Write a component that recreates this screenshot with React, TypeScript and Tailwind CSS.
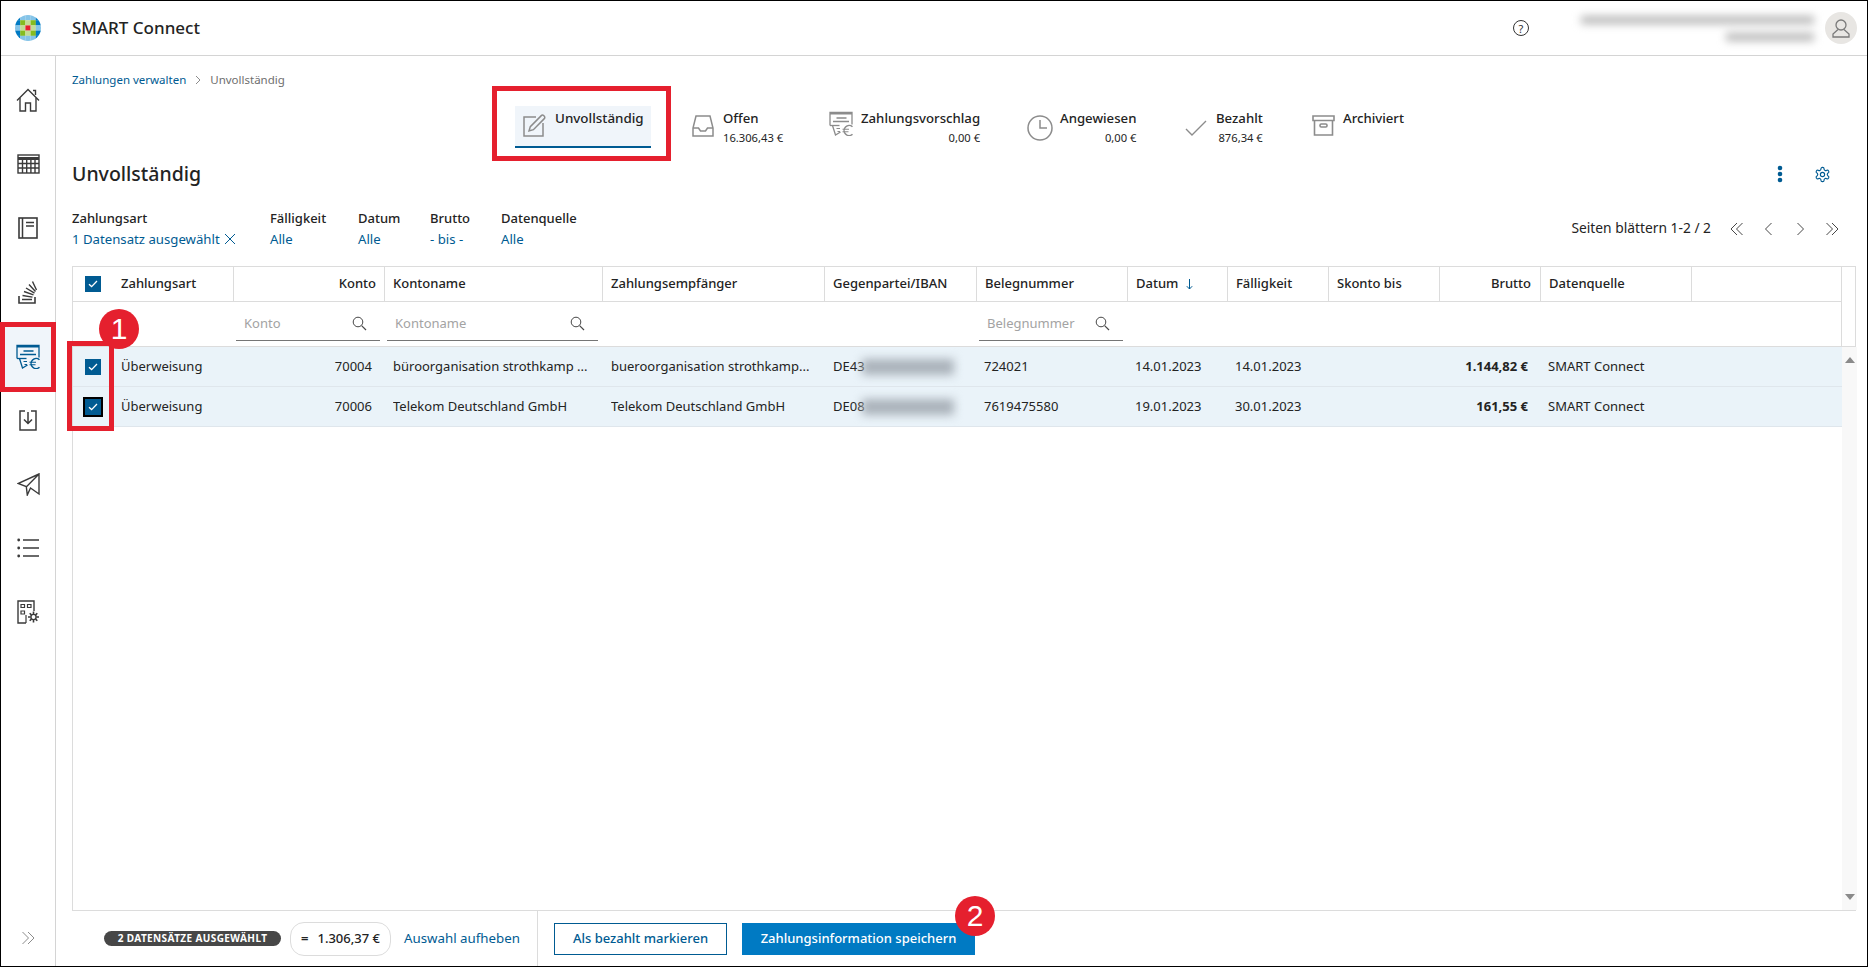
import React from "react";

const FONT = { fontFamily: '"Noto Sans", "Liberation Sans", sans-serif' };

function Logo() {
  const b = "#007ac3", l = "#85c4e8", g = "#85bc20", p = "#c4dc98", r = "#e5202e";
  const rows = [
    [b, l, l, l, b],
    [b, g, p, g, b],
    [l, p, r, p, l],
    [b, g, p, g, b],
    [b, l, l, l, b],
  ];
  return (
    <svg width="26" height="26" viewBox="0 0 26 26">
      <defs>
        <clipPath id="lg"><circle cx="13" cy="13" r="13" /></clipPath>
      </defs>
      <g clipPath="url(#lg)">
        {rows.map((row, y) =>
          row.map((c, x) => (
            <rect key={x + "-" + y} x={x * 5.2} y={y * 5.2} width="5.3" height="5.3" fill={c} />
          ))
        )}
      </g>
    </svg>
  );
}

const S = { fill: "none", stroke: "currentColor", strokeWidth: 1.4 } as const;

const Home = () => (
  <svg width="24" height="24" viewBox="0 0 24 24" {...S}>
    <path d="M1 12.5 12 1.5l11 11" />
    <path d="M4 10v13h5.5v-8h5v8H20V10" />
    <path d="M17 2.5h2.5V7" />
  </svg>
);
const Grid = () => (
  <svg width="23" height="20" viewBox="0 0 23 20" {...S}>
    <rect x="1" y="1" width="21" height="18" />
    <path d="M1 4.5h21" strokeWidth="3" />
    <path d="M1 9.5h21M1 14h21M5.5 6v13M9.7 6v13M13.9 6v13M18 6v13" />
  </svg>
);
const Book = () => (
  <svg width="20" height="22" viewBox="0 0 20 22" {...S}>
    <rect x="1" y="1" width="18" height="20" strokeWidth="1.6" />
    <path d="M4.5 1v20M8 5.5h8M8 9h8" strokeWidth="1.5" />
  </svg>
);
const Stack = () => (
  <svg width="20" height="24" viewBox="0 0 20 24" {...S}>
    <path d="M1 16v7h16v-6" strokeWidth="1.6" />
    <path d="M4 19.5h10M4.5 15.5l10 1.6M6 11.5l9.5 3.4M8 8l8.5 5.2M11 4.5l6.5 7M14.5 1.5l4 8.5" />
  </svg>
);
const Pay = () => (
  <svg width="24" height="25" viewBox="0 0 24 25" fill="none" stroke="currentColor" strokeWidth="1.3">
    <path d="M1 14.5V1.5h22v12" />
    <path d="M1 2.5h22" strokeWidth="2" />
    <path d="M1 14.5h9.5" />
    <path d="M7.5 7h10M4 10.5h16" strokeWidth="1.4" />
    <path d="M3.5 14.5 6.5 24l5-3" />
    <path d="M7.5 17.5h3.5M8.5 20.5h2.5" strokeWidth="1.1" />
    <path d="M23.5 15.8a5 5 0 1 0 0 7.4" strokeWidth="1.5" />
    <path d="M13.5 18.2h6.5M13.5 20.8h6" strokeWidth="1.1" />
  </svg>
);
const Download = () => (
  <svg width="18" height="21" viewBox="0 0 18 21" {...S}>
    <path d="M6 1H1v19h16V1h-5" strokeWidth="1.5" />
    <path d="M9 2v11M5 9.5l4 4 4-4" strokeWidth="1.5" />
  </svg>
);
const Send = () => (
  <svg width="23" height="23" viewBox="0 0 23 23" {...S}>
    <path d="M22 1 1 10.5l8.5 3.2L22 1v20l-8.5-6-3.2 7-1-8.3" />
  </svg>
);
const ListI = () => (
  <svg width="22" height="20" viewBox="0 0 22 20" {...S}>
    <circle cx="1.7" cy="2" r="1.4" fill="currentColor" stroke="none" />
    <circle cx="1.7" cy="10" r="1.4" fill="currentColor" stroke="none" />
    <circle cx="1.7" cy="18" r="1.4" fill="currentColor" stroke="none" />
    <path d="M6 2h16M6 10h16M6 18h16" />
  </svg>
);
const BuildingGear = () => (
  <svg width="23" height="24" viewBox="0 0 23 24" {...S}>
    <path d="M9 23H1V1h16v10" strokeWidth="1.4" />
    <path d="M4 4.5h3.5v3H4zM10.5 4.5H14v3h-3.5zM4 11h3.5v3H4zM9 15v8" strokeWidth="1.2" />
    <circle cx="16.5" cy="17" r="2.6" />
    <path d="M16.5 11.5v2.5M16.5 20v2.5M11 17h2.5M19.5 17H22M12.7 13.2l1.7 1.7M18.6 19.1l1.7 1.7M20.3 13.2l-1.7 1.7M14.4 19.1l-1.7 1.7" strokeWidth="1.6" />
  </svg>
);
const Dbl = ({ dir }: { dir: "l" | "r" }) => (
  <svg width="15" height="14" viewBox="0 0 15 14" fill="none" stroke="currentColor" strokeWidth="1">
    <path d={dir === "r" ? "M1.5 1l6 6-6 6M7 1l6 6-6 6" : "M13.5 1l-6 6 6 6M8 1 2 7l6 6"} />
  </svg>
);
const Sgl = ({ dir }: { dir: "l" | "r" }) => (
  <svg width="9" height="14" viewBox="0 0 9 14" fill="none" stroke="currentColor" strokeWidth="1">
    <path d={dir === "r" ? "M1.5 1l6 6-6 6" : "M7.5 1l-6 6 6 6"} />
  </svg>
);
const Search = () => (
  <svg width="15" height="15" viewBox="0 0 15 15" fill="none" stroke="#474747" strokeWidth="1">
    <circle cx="6" cy="6" r="4.8" />
    <path d="M9.6 9.6 14 14" strokeWidth="1.2" />
  </svg>
);
const Check = () => (
  <svg width="10" height="8" viewBox="0 0 10 8" fill="none" stroke="#fff" strokeWidth="1.3">
    <path d="M1 4.2 3.6 6.6 9 1" />
  </svg>
);

const TabPencil = () => (
  <svg width="23" height="24" viewBox="0 0 23 24" fill="none" stroke="currentColor" strokeWidth="1.5">
    <path d="M13 4H1v19h19V10" />
    <path d="M6 18l1.3-4.4L18.3 2.6a1.6 1.6 0 0 1 2.3 0l.7.7a1.6 1.6 0 0 1 0 2.3L10.4 16.7z" />
  </svg>
);
const TabInbox = () => (
  <svg width="22" height="22" viewBox="0 0 22 22" fill="none" stroke="currentColor" strokeWidth="1.5">
    <path d="M4 1h14l3 12v8H1v-8z" />
    <path d="M1 13h5.5l2 3h5l2-3H21" />
  </svg>
);
const TabClock = () => (
  <svg width="26" height="26" viewBox="0 0 26 26" fill="none" stroke="currentColor" strokeWidth="1.5">
    <circle cx="13" cy="13" r="12" />
    <path d="M13 5v8h7" />
  </svg>
);
const TabCheck = () => (
  <svg width="22" height="17" viewBox="0 0 22 17" fill="none" stroke="currentColor" strokeWidth="1.4">
    <path d="M1 9l6 6L21 1" />
  </svg>
);
const TabArchive = () => (
  <svg width="23" height="21" viewBox="0 0 23 21" fill="none" stroke="currentColor" strokeWidth="1.6">
    <path d="M1 1h21v4.5H1zM2.5 5.5V20h18V5.5" />
    <rect x="8" y="9" width="7" height="3" rx="1.2" />
  </svg>
);

function Box({ outlined }: { outlined?: boolean }) {
  return (
    <span
      className={
        outlined
          ? "flex h-[20px] w-[20px] -mx-[2px] items-center justify-center border-2 border-black bg-[#005b92]"
          : "flex h-[16px] w-[16px] items-center justify-center bg-[#005b92]"
      }
    >
      <Check />
    </span>
  );
}

const TH = "flex items-center border-r border-[#dcdcdc] pl-2 text-[13px] font-medium text-[#232323]";
const TD = "flex items-center pl-[7px] text-[13px] text-[#232323] min-w-0";
const COLS =
  "grid grid-cols-[161px_151px_218px_222px_152px_151px_100px_101px_111px_101px_151px_150px]";

function FilterInput({ ph, w }: { ph: string; w: string }) {
  return (
    <div className={`ml-[2px] flex h-[33px] items-center justify-between border-b border-[#757575] pl-2 pr-[13px] ${w}`}>
      <span className="text-[13px] text-[#a3a3a3]">{ph}</span>
      <Search />
    </div>
  );
}

type Row = {
  to: string; num: string; name: string; recv: string; iban: string; beleg: string;
  d: string; f: string; br: string; outlined?: boolean;
};
const ROWS: Row[] = [
  { to: "Überweisung", num: "70004", name: "büroorganisation strothkamp ...", recv: "bueroorganisation strothkamp...", iban: "DE43", beleg: "724021", d: "14.01.2023", f: "14.01.2023", br: "1.144,82 €" },
  { to: "Überweisung", num: "70006", name: "Telekom Deutschland GmbH", recv: "Telekom Deutschland GmbH", iban: "DE08", beleg: "7619475580", d: "19.01.2023", f: "30.01.2023", br: "161,55 €", outlined: true },
];

function Tab({ icon, title, sub, cls, iconW, iconTop }: { icon: React.ReactNode; title: string; sub?: string; cls: string; iconW: string; iconTop: string }) {
  return (
    <div className={`flex h-[42px] ${cls}`}>
      <div className={`flex shrink-0 justify-start text-[#8c8c8c] ${iconW} ${iconTop}`}>{icon}</div>
      <div className="flex w-max flex-col pt-[2px]">
        <span className="whitespace-nowrap text-[13.2px] font-medium leading-5 text-[#232323]">{title}</span>
        {sub && <span className="self-end whitespace-nowrap text-[11.2px] leading-5 text-[#232323]">{sub}</span>}
      </div>
    </div>
  );
}

function Filter({ label, value, x }: { label: string; value: React.ReactNode; x: string }) {
  return (
    <div className={`flex flex-col ${x}`}>
      <span className="whitespace-nowrap text-[13px] font-medium leading-5 text-[#232323]">{label}</span>
      <span className="mt-[1px] flex items-center whitespace-nowrap text-[13.2px] leading-5 text-[#005b92]">{value}</span>
    </div>
  );
}

export default function App() {
  const side: [React.ReactNode, boolean][] = [
    [<Home />, false], [<Grid />, false], [<Book />, false], [<Stack />, false],
    [<Pay />, true], [<Download />, false], [<Send />, false], [<ListI />, false], [<BuildingGear />, false],
  ];
  return (
    <div className="relative h-[967px] w-[1868px] overflow-hidden bg-white" style={FONT}>
      <div className="flex h-full w-full flex-col border border-black">
        <header className="flex h-[55px] shrink-0 items-center border-b border-[#d4d4d4] pr-[10px]">
          <div className="flex w-[54px] shrink-0 justify-center"><Logo /></div>
          <span className="ml-[17px] text-[17px] font-medium text-[#232323]">SMART Connect</span>
          <div className="ml-auto flex h-[16px] w-[16px] items-center justify-center rounded-full border border-[#333] text-[11px] leading-none text-[#333]">?</div>
          <div className="ml-[52px] flex w-[233px] flex-col items-end gap-[9px] blur-[4px]">
            <div className="h-[8px] w-[233px] bg-[#b8b8b8]" />
            <div className="h-[8px] w-[88px] bg-[#b8b8b8]" />
          </div>
          <div className="ml-[11px] flex h-[32px] w-[32px] items-center justify-center rounded-full bg-[#e8e6e3]">
            <svg width="18" height="19" viewBox="0 0 18 19" fill="none" stroke="#7a7a7a" strokeWidth="1.3">
              <circle cx="9" cy="6" r="5" />
              <path d="M6 10.5 1 15v3h16v-3l-5-4.5" />
            </svg>
          </div>
        </header>

        <div className="flex min-h-0 flex-1">
          <aside className="flex w-[55px] shrink-0 flex-col border-r border-[#d4d4d4] pt-[12px]">
            {side.map(([icon, active], i) => (
              <div key={i} className={`flex h-[64px] items-center justify-center ${active ? "bg-[#f0f5fa] text-[#005b92]" : "text-[#3a3a3a]"}`}>
                {icon}
              </div>
            ))}
            <div className="mt-auto flex h-[56px] items-center justify-center text-[#8c8c8c]"><Dbl dir="r" /></div>
          </aside>

          <main className="flex min-w-0 flex-1 flex-col pl-[16px] pr-[11px]">
            <div className="flex h-[48px] shrink-0 items-center text-[11.5px]">
              <span className="text-[#005b92]">Zahlungen verwalten</span>
              <span className="mx-[9px] text-[#8c8c8c]"><svg width="6" height="10" viewBox="0 0 6 10" fill="none" stroke="currentColor"><path d="M1 1l4 4-4 4" /></svg></span>
              <span className="text-[#6e6e6e]">Unvollständig</span>
            </div>

            <div className="flex h-[44px] shrink-0 items-start pl-[443px] pt-[2px]">
              <div className="flex h-[42px] w-[136px] items-start border-b-2 border-[#005b92] bg-[#f0f5fa] pl-[8px]">
                <div className="w-[32px] shrink-0 pt-[7px] text-[#8c8c8c]"><TabPencil /></div>
                <span className="whitespace-nowrap pt-[2px] text-[13.4px] font-medium leading-5 text-[#232323]">Unvollständig</span>
              </div>
              <Tab icon={<TabInbox />} title="Offen" sub="16.306,43 €" cls="ml-[41px] w-[90px]" iconW="w-[31px]" iconTop="pt-[9px]" />
              <Tab icon={<Pay />} title="Zahlungsvorschlag" sub="0,00 €" cls="ml-[47px] w-[151px]" iconW="w-[32px]" iconTop="pt-[5px]" />
              <Tab icon={<TabClock />} title="Angewiesen" sub="0,00 €" cls="ml-[47px] w-[108px]" iconW="w-[33px]" iconTop="pt-[9px]" />
              <Tab icon={<TabCheck />} title="Bezahlt" sub="876,34 €" cls="ml-[50px] w-[78px]" iconW="w-[31px]" iconTop="pt-[14px]" />
              <Tab icon={<TabArchive />} title="Archiviert" cls="ml-[49px] w-[93px]" iconW="w-[31px]" iconTop="pt-[9px]" />
            </div>

            <div className="mt-[8px] flex h-[36px] shrink-0 items-center justify-between pr-[18px]">
              <h1 className="text-[19.5px] font-medium text-[#232323]">Unvollständig</h1>
              <div className="flex items-center gap-[10px] text-[#005b92]">
                <div className="flex w-[32px] justify-center">
                  <svg width="6" height="18" viewBox="0 0 6 18" fill="currentColor"><circle cx="3" cy="3" r="2.3" /><circle cx="3" cy="9" r="2.3" /><circle cx="3" cy="15" r="2.3" /></svg>
                </div>
                <div className="flex w-[32px] justify-center">
                  <svg width="17" height="17" viewBox="0 0 24 24" fill="none" stroke="currentColor" strokeWidth="1.6">
                    <path d="M12.2 2h-.4a2 2 0 0 0-2 2v.2a2 2 0 0 1-1 1.7l-.4.3a2 2 0 0 1-2 0l-.2-.1a2 2 0 0 0-2.7.7l-.2.4a2 2 0 0 0 .7 2.7l.2.1a2 2 0 0 1 1 1.7v.5a2 2 0 0 1-1 1.8l-.2.1a2 2 0 0 0-.7 2.7l.2.4a2 2 0 0 0 2.7.7l.2-.1a2 2 0 0 1 2 0l.4.3a2 2 0 0 1 1 1.7v.2a2 2 0 0 0 2 2h.4a2 2 0 0 0 2-2v-.2a2 2 0 0 1 1-1.7l.4-.3a2 2 0 0 1 2 0l.2.1a2 2 0 0 0 2.7-.7l.2-.4a2 2 0 0 0-.7-2.7l-.2-.1a2 2 0 0 1-1-1.8v-.5a2 2 0 0 1 1-1.7l.2-.1a2 2 0 0 0 .7-2.7l-.2-.4a2 2 0 0 0-2.7-.7l-.2.1a2 2 0 0 1-2 0l-.4-.3a2 2 0 0 1-1-1.7V4a2 2 0 0 0-2-2z" />
                    <circle cx="12" cy="12" r="3" />
                  </svg>
                </div>
              </div>
            </div>

            <div className="mt-[16px] mb-[17px] flex h-[41px] shrink-0 items-center pr-[8px]">
              <Filter x="w-[198px]" label="Zahlungsart" value={<>1 Datensatz ausgewählt<svg className="ml-[4px]" width="12" height="12" viewBox="0 0 12 12" fill="none" stroke="#005b92"><path d="M1 1l10 10M11 1 1 11" /></svg></>} />
              <Filter x="w-[88px]" label="Fälligkeit" value="Alle" />
              <Filter x="w-[72px]" label="Datum" value="Alle" />
              <Filter x="w-[71px]" label="Brutto" value="- bis -" />
              <Filter x="w-[120px]" label="Datenquelle" value="Alle" />
              <div className="ml-auto flex items-center">
                <span className="mr-[9px] text-[13.8px] text-[#232323]">Seiten blättern 1-2 / 2</span>
                {[<Dbl dir="l" />, <Sgl dir="l" />, <Sgl dir="r" />, <Dbl dir="r" />].map((c, i) => (
                  <span key={i} className="flex w-[32px] justify-center text-[#474747]">{c}</span>
                ))}
              </div>
            </div>

            <section className="flex min-h-0 flex-1 flex-col border border-[#dcdcdc]">
              <div className={`${COLS} h-[34px] w-[1769px] shrink-0 border-r-0`}>
                <div className={`${TH} pl-[12px]`}>
                  <Box />
                  <span className="ml-[20px]">Zahlungsart</span>
                </div>
                <div className={`${TH} justify-end pr-[8px]`}>Konto</div>
                <div className={TH}>Kontoname</div>
                <div className={TH}>Zahlungsempfänger</div>
                <div className={TH}>Gegenpartei/IBAN</div>
                <div className={TH}>Belegnummer</div>
                <div className={TH}>
                  Datum
                  <svg className="ml-[8px]" width="7" height="11" viewBox="0 0 7 11" fill="none" stroke="#005b92"><path d="M3.5 0v10M.8 7.2l2.7 2.8 2.7-2.8" /></svg>
                </div>
                <div className={TH}>Fälligkeit</div>
                <div className={TH}>Skonto bis</div>
                <div className={`${TH} justify-end pr-[9px]`}>Brutto</div>
                <div className={TH}>Datenquelle</div>
                <div className={TH} />
              </div>
              <div className="h-[1px] w-[1769px] shrink-0 bg-[#dcdcdc]" />
              <div className={`${COLS} h-[44px] w-[1769px] shrink-0 items-center`}>
                <div />
                <div><FilterInput ph="Konto" w="w-[144px]" /></div>
                <div><FilterInput ph="Kontoname" w="w-[211px]" /></div>
                <div />
                <div />
                <div><FilterInput ph="Belegnummer" w="w-[144px]" /></div>
                <div /><div /><div /><div /><div />
                <div className="h-[44px] border-r border-[#dcdcdc]" />
              </div>
              <div className="h-[1px] shrink-0 bg-[#dcdcdc]" />

              <div className="flex min-h-0 flex-1">
                <div className="flex-1">
                  {ROWS.map((r, i) => (
                    <div key={i} className={`${COLS} h-[40px] border-b border-[#dfe6ec] bg-[#eaf3f9]`}>
                      <div className={`${TD} pl-[12px]`}>
                        <Box outlined={r.outlined} />
                        <span className="ml-[20px]">{r.to}</span>
                      </div>
                      <div className={`${TD} justify-end pr-[13px]`}>{r.num}</div>
                      <div className={`${TD} pl-[8px]`}><span className="truncate">{r.name}</span></div>
                      <div className={`${TD} pl-[8px]`}><span className="truncate">{r.recv}</span></div>
                      <div className={`${TD} pl-[8px]`}>
                        <span>{r.iban}</span>
                        <span className="-ml-[3px] h-[16px] w-[92px] bg-[#aab2ba] blur-[5px]" />
                      </div>
                      <div className={TD}>{r.beleg}</div>
                      <div className={TD}>{r.d}</div>
                      <div className={TD}>{r.f}</div>
                      <div className={TD} />
                      <div className={`${TD} justify-end pr-[13px] font-bold`}>{r.br}</div>
                      <div className={TD}>SMART Connect</div>
                      <div />
                    </div>
                  ))}
                </div>
                <div className="flex w-[15px] shrink-0 flex-col items-center justify-between bg-[#f8f8f8] py-[10px]">
                  <svg width="10" height="6" viewBox="0 0 10 6" fill="#8a8a8a"><path d="M5 0l5 6H0z" /></svg>
                  <svg width="10" height="6" viewBox="0 0 10 6" fill="#8a8a8a"><path d="M0 0h10L5 6z" /></svg>
                </div>
              </div>
            </section>

            <footer className="flex h-[55px] shrink-0">
              <div className="flex w-[466px] shrink-0 items-center border-r border-[#dcdcdc] pl-[32px]">
                <span className="flex h-[15px] w-[177px] items-center justify-center rounded-full bg-[#474747] text-[10px] font-bold tracking-[0.4px] text-white">2 DATENSÄTZE AUSGEWÄHLT</span>
                <span className="ml-[9px] flex h-[34px] w-[101px] items-center justify-center gap-[9px] rounded-[14px] border border-[#dcdcdc] text-[13px] font-medium text-[#232323]">
                  <span className="font-bold">=</span>
                  <span>1.306,37 €</span>
                </span>
                <span className="ml-[13px] whitespace-nowrap text-[13.3px] text-[#005b92]">Auswahl aufheben</span>
              </div>
              <div className="flex items-center gap-[15px] pl-[16px]">
                <button className="flex h-[32px] w-[173px] items-center justify-center border border-[#005b92] text-[13px] font-medium text-[#005b92]">Als bezahlt markieren</button>
                <button className="flex h-[32px] w-[233px] items-center justify-center bg-[#007ac3] text-[13px] font-medium text-white">Zahlungsinformation speichern</button>
              </div>
            </footer>
          </main>
        </div>
      </div>

      {/* annotation overlays */}
      <div className="absolute left-0 top-[322px] h-[70px] w-[56px] border-[5px] border-[#e5202e]" />
      <div className="absolute left-[492px] top-[86px] h-[75px] w-[179px] border-[5px] border-[#e5202e]" />
      <div className="absolute left-[67px] top-[341px] h-[90px] w-[47px] border-[5px] border-[#e5202e]" />
      <div className="absolute left-[99px] top-[309px] flex h-[40px] w-[40px] items-center justify-center rounded-full bg-[#e5202e] text-[30px] leading-none text-white" style={{ fontFamily: '"Liberation Sans", sans-serif' }}>1</div>
      <div className="absolute left-[955px] top-[896px] flex h-[40px] w-[40px] items-center justify-center rounded-full bg-[#e5202e] text-[30px] leading-none text-white" style={{ fontFamily: '"Liberation Sans", sans-serif' }}>2</div>
    </div>
  );
}
